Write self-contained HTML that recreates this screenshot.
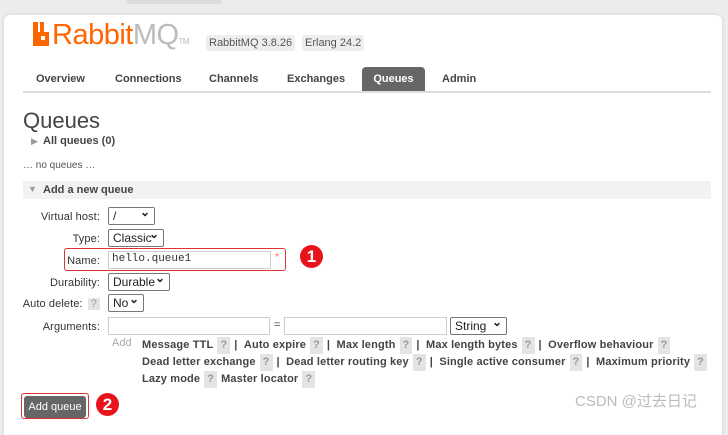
<!DOCTYPE html>
<html><head><meta charset="utf-8"><style>
*{box-sizing:border-box;margin:0;padding:0}
body{width:728px;height:419px;overflow:hidden;background:#ececec;font-family:"Liberation Sans",Verdana,sans-serif;font-size:11px;color:#484848;position:relative}
.page{position:absolute;left:4px;top:15px;width:718px;height:420px;background:#fff;border-radius:6px 6px 0 0;box-shadow:0 0 3px #ccc}
.a{position:absolute;white-space:nowrap}
.b{font-weight:bold;color:#444}
.badge{background:#eee;border-radius:3px;padding:2px 3px;font-size:11px;color:#555}
.tab{position:absolute;top:67px;height:24px;line-height:24px;font-weight:bold;color:#444;font-size:11px}
.sel{position:absolute;height:18px;border:1px solid #777;border-radius:2px;background:#fff;font-size:12px;color:#222;padding:1px 4px;line-height:15px}
.sel:after{content:"⌄";position:absolute;right:4px;top:-3px;font-size:12px;font-weight:bold}
.inp{position:absolute;height:18px;border:1px solid #ccc;background:#fff}
.lbl{position:absolute;right:628px;white-space:nowrap;color:#333;font-size:11px;letter-spacing:0.1px}
.q{display:inline-block;background:#e4e4e4;color:#999;padding:0 3px;margin:0 4px}
.circ{position:absolute;width:23px;height:23px;border-radius:50%;background:#e8141c;color:#fff;font-weight:bold;font-size:17px;text-align:center;line-height:23px}
</style></head><body>
<div class="a" style="left:126px;top:0;width:96px;height:4px;background:#ddd;border-radius:0 0 3px 3px"></div>
<div class="page"></div>
<div class="a" style="left:33px;top:22px;width:16px;height:24px">
<div class="a" style="left:0;top:0;width:5px;height:24px;background:#f60"></div>
<div class="a" style="left:7px;top:0;width:4px;height:10px;background:#f60"></div>
<div class="a" style="left:0;top:10px;width:16px;height:14px;background:#f60"></div>
<div class="a" style="left:8px;top:14px;width:4px;height:4px;background:#fff"></div>
</div>
<div class="a" style="left:52px;top:19px;font-size:29px;color:#f60;letter-spacing:-0.5px">Rabbit<span style="color:#bbb">MQ</span><span style="font-size:8px;color:#bbb">TM</span></div>
<div class="a badge" style="left:206px;top:35px">RabbitMQ 3.8.26</div>
<div class="a badge" style="left:302px;top:35px">Erlang 24.2</div>
<div class="tab" style="left:36px">Overview</div>
<div class="tab" style="left:115px">Connections</div>
<div class="tab" style="left:209px">Channels</div>
<div class="tab" style="left:287px">Exchanges</div>
<div class="tab" style="left:362px;width:63px;background:#666;color:#fff;text-align:center;border-radius:4px 4px 0 0">Queues</div>
<div class="tab" style="left:442px">Admin</div>
<div class="a" style="left:23px;top:91px;width:688px;height:2px;background:#ddd"></div>
<div class="a" style="left:23px;top:108px;font-size:22px;color:#444">Queues</div>
<div class="a" style="left:31px;top:136px;color:#999;font-size:9px">▶</div>
<div class="a b" style="left:43px;top:135px">All queues (0)</div>
<div class="a" style="left:23px;top:160px;color:#555;font-size:10px">… no queues …</div>
<div class="a" style="left:23px;top:181px;width:688px;height:18px;background:#f2f2f2"></div>
<div class="a" style="left:28px;top:184px;color:#999;font-size:9px">▼</div>
<div class="a b" style="left:43px;top:184px">Add a new queue</div>
<div class="lbl" style="top:211px">Virtual host:</div>
<div class="sel" style="left:108px;top:207px;width:47px">/</div>
<div class="lbl" style="top:233px">Type:</div>
<div class="sel" style="left:108px;top:229px;width:56px">Classic</div>
<div class="a" style="left:64px;top:248px;width:222px;height:23px;border:1.5px solid #d33;border-radius:3px"></div>
<div class="lbl" style="top:255px">Name:</div>
<div class="inp" style="left:108px;top:251px;width:163px;font-family:'Liberation Mono',monospace;font-size:11px;padding:1px 3px;color:#333">hello.queue1</div>
<div class="a" style="left:275px;top:252px;color:#f66;font-size:10px">*</div>
<div class="circ" style="left:300px;top:245px">1</div>
<div class="lbl" style="top:277px">Durability:</div>
<div class="sel" style="left:108px;top:273px;width:62px">Durable</div>
<div class="lbl" style="top:298px">Auto delete: <span class="q" style="margin:0 0 0 2px">?</span></div>
<div class="sel" style="left:108px;top:294px;width:36px">No</div>
<div class="lbl" style="top:321px">Arguments:</div>
<div class="inp" style="left:108px;top:317px;width:162px"></div>
<div class="a" style="left:274px;top:319px">=</div>
<div class="inp" style="left:284px;top:317px;width:163px"></div>
<div class="sel" style="left:450px;top:317px;width:57px">String</div>
<div class="a" style="left:112px;top:337px;color:#aaa">Add</div>
<div class="a b" style="left:142px;top:337px;font-size:11px;line-height:17px;letter-spacing:0.15px">Message TTL<span class="q">?</span>| &nbsp;Auto expire<span class="q">?</span>| &nbsp;Max length<span class="q">?</span>| &nbsp;Max length bytes<span class="q">?</span>| &nbsp;Overflow behaviour<span class="q">?</span><br>Dead letter exchange<span class="q">?</span>| &nbsp;Dead letter routing key<span class="q">?</span>| &nbsp;Single active consumer<span class="q">?</span>| &nbsp;Maximum priority<span class="q">?</span><br>Lazy mode<span class="q">?</span>Master locator<span class="q">?</span></div>
<div class="a" style="left:21px;top:393px;width:68px;height:26px;border:1.5px solid #d33;border-radius:3px"></div>
<div class="a" style="left:24px;top:396px;width:62px;height:22px;background:#666;color:#fff;border-radius:3px;text-align:center;line-height:22px;font-size:11px">Add queue</div>
<div class="circ" style="left:96px;top:393px">2</div>
<div class="a" style="left:575px;top:390px;font-size:15px;color:#bbb;font-family:'Liberation Sans','Noto Sans CJK SC',sans-serif">CSDN @过去日记</div>
</body></html>
